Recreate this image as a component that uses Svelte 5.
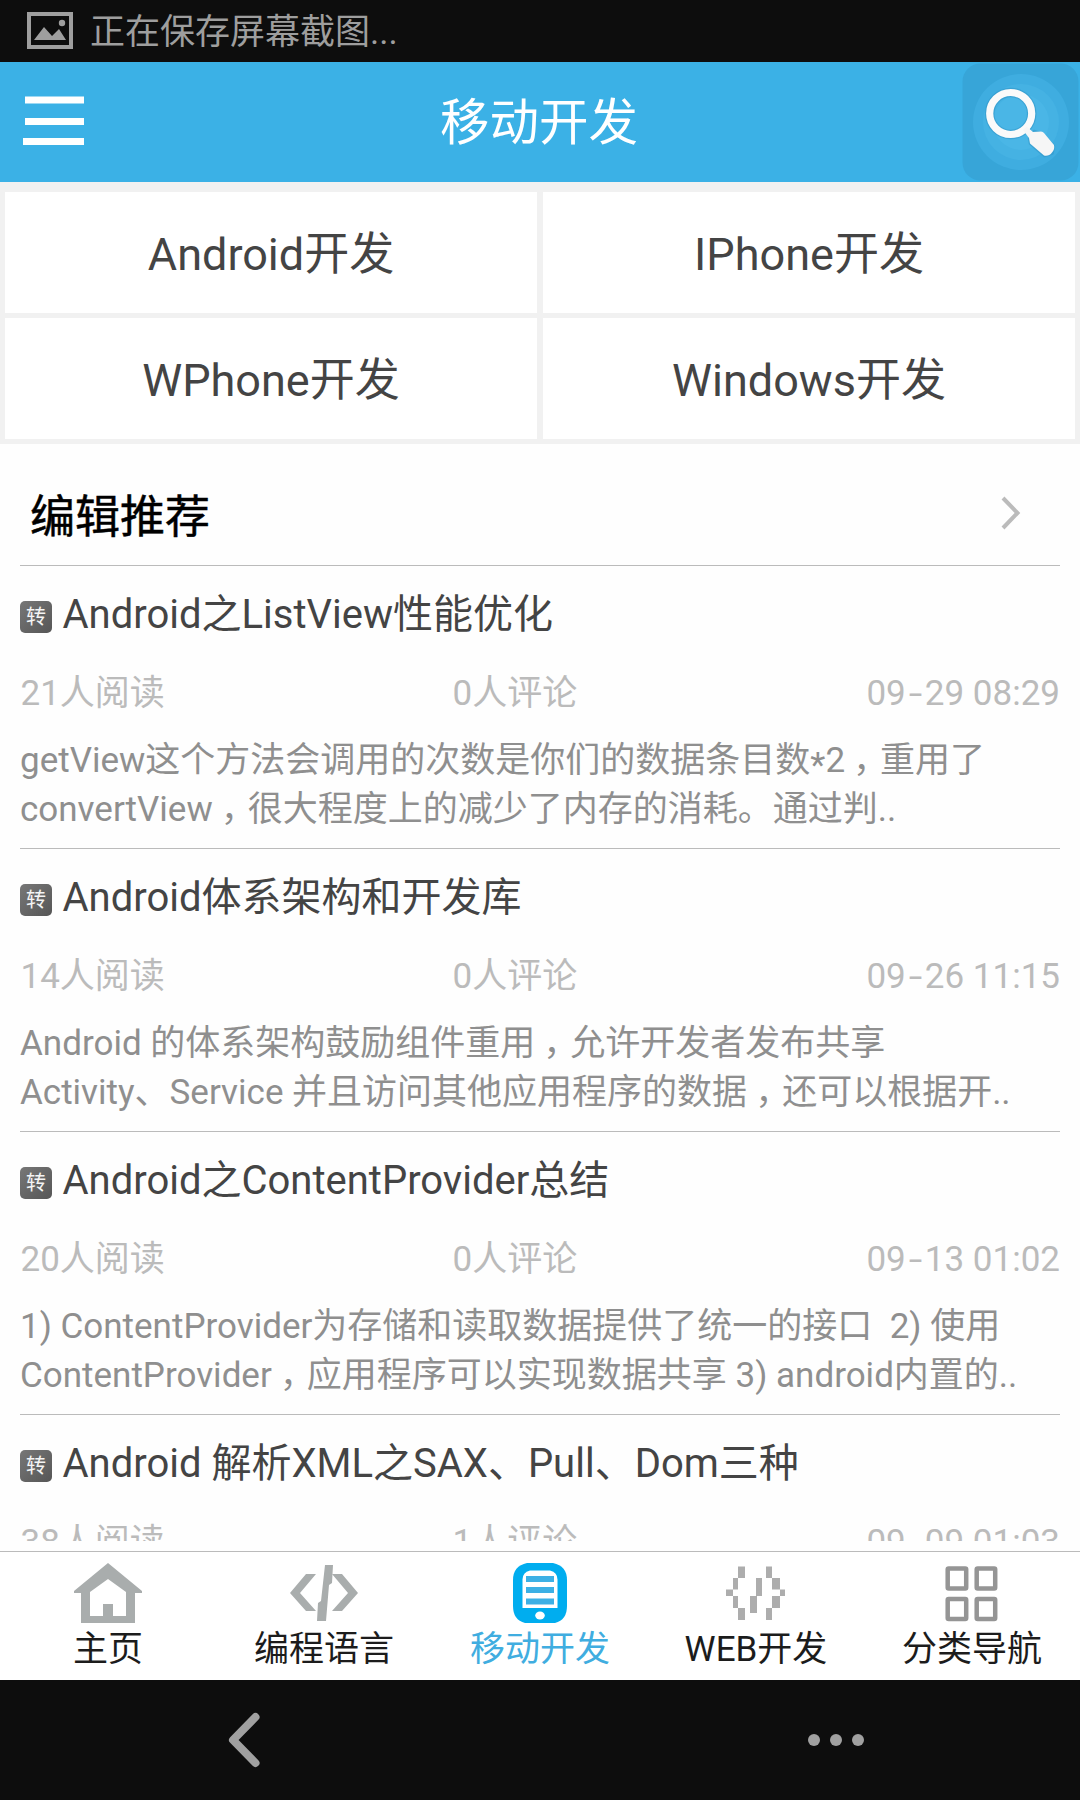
<script>
  const categories = ['Android开发', 'IPhone开发', 'WPhone开发', 'Windows开发'];
  const articles = [
    { title: 'Android之ListView性能优化', reads: 21, comments: 0, day: ['09', '29'], hour: '08:29',
      lines: ['getView这个方法会调用的次数是你们的数据条目数*2，重用了', 'convertView，很大程度上的减少了内存的消耗。通过判..'] },
    { title: 'Android体系架构和开发库', reads: 14, comments: 0, day: ['09', '26'], hour: '11:15',
      lines: ['Android 的体系架构鼓励组件重用，允许开发者发布共享', 'Activity、Service 并且访问其他应用程序的数据，还可以根据开..'] },
    { title: 'Android之ContentProvider总结', reads: 20, comments: 0, day: ['09', '13'], hour: '01:02',
      lines: ['1) ContentProvider为存储和读取数据提供了统一的接口  2) 使用', 'ContentProvider，应用程序可以实现数据共享 3) android内置的..'] },
    { title: 'Android 解析XML之SAX、Pull、Dom三种', reads: 38, comments: 1, day: ['09', '09'], hour: '01:03', lines: [] }
  ];
  // Full-width commas and asterisks are set in their own spans to adjust their place in the line.
  const parts = (line) => line.split(/([，*])/);
</script>

<div class="screen">
  <div class="status">
    <svg width="46" height="38" viewBox="0 0 46 38"><rect x="2" y="2" width="42" height="33" fill="none" stroke="#9e9e9e" stroke-width="4"/><path d="M7 28L17 15l8 9 7-7 7 11z" fill="#9e9e9e"/><circle cx="35" cy="11" r="3.2" fill="#9e9e9e"/></svg>
    <span>正在保存屏幕截图...</span>
  </div>

  <header>
    <svg class="menu" width="61" height="50" viewBox="0 0 61 50"><path d="M2 4h59M2 25.500h59M0 45.500h61" stroke="#fff" stroke-width="7"/></svg>
    <h1>移动开发</h1>
    <svg class="search" width="118" height="119" viewBox="0 0 118 119">
      <rect x=".5" y=".5" width="116" height="117" rx="18" fill="#37a5d8"/>
      <circle cx="59" cy="59" r="48" fill="#3fade0"/>
      <circle cx="59" cy="59" r="38" fill="#45b2e3"/>
      <circle cx="59" cy="59" r="28" fill="#4ab6e6"/>
      <g stroke="#2c8fc0" stroke-opacity=".45" fill="none" stroke-linejoin="round"><circle cx="48.700" cy="50.500" r="21" stroke-width="9.500"/><path d="M72 68l8 2.500 12 12.500-1.500 7.500-8 2.500L68 80.500 67 75z" stroke-width="2.500"/></g>
      <circle cx="48.700" cy="50.500" r="21" fill="none" stroke="#fafafa" stroke-width="7.200"/>
      <path d="M64.700 63.500L71 69l8-.5q2 0 3 1.500l10 12q1 4-2 7.500-3 4-8 3L68 80.500 67 75l-6-8z" fill="#f6f6f6"/>
    </svg>
  </header>

  <div class="cats">
    {#each categories as name}
      <div class="cat">{name}</div>
    {/each}
  </div>

  <main>
    <div class="section">
      <h2>编辑推荐</h2>
      <svg width="20" height="34" viewBox="0 0 20 34"><path d="M2 2l14.500 15L2 32" fill="none" stroke="#bbb" stroke-width="4"/></svg>
    </div>
    {#each articles as a}
      <article>
        <div class="title"><span class="badge">转</span><h3>{a.title}</h3></div>
        <div class="meta"><span>{a.reads}人阅读</span><span>{a.comments}人评论</span><span>{a.day[0]}<span class="dash">-</span>{a.day[1]} {a.hour}</span></div>
        <div class="desc">
          {#each a.lines as line}
            <p>{#each parts(line) as t}{#if t === '，'}<span class="comma">，</span>{:else if t === '*'}<span class="star">*</span>{:else}{t}{/if}{/each}</p>
          {/each}
        </div>
      </article>
    {/each}
  </main>

  <nav class="tabs">
    <div class="tab">
      <svg width="70" height="60" viewBox="0 0 70 60"><path fill-rule="evenodd" d="M35 0l34 28v2h-7v30H8V30H1v-2zM35 16L17 29v24h13V41h10v12h13V29z" fill="#a9adad"/></svg>
      <span>主页</span>
    </div>
    <div class="tab">
      <svg width="70" height="60" viewBox="0 0 70 60"><path d="M17 11h10L11 30l16 18H17L1 30zM53 11H43l16 19-16 18h10l16-18zM36 2h8l-1 18-3 2-3 36h-9l1-18 3-2z" fill="#a9adad"/></svg>
      <span>编程语言</span>
    </div>
    <div class="tab active">
      <svg width="54" height="60" viewBox="0 0 54 60"><path d="M14 0h26q14 3 14 17v26q0 14-12 17H12Q0 57 0 43V17Q0 3 14 0z" fill="#00adef"/><path d="M17 7.500h20q7.500 2 7.500 9V45h-35V16.500q0-7 7.500-9z" fill="#fff"/><path d="M13 16h28M13 27h28M13 38.500h28" stroke="#3cb0e5" stroke-width="6"/><ellipse cx="27" cy="52.500" rx="4.800" ry="4" fill="#fff"/></svg>
      <span>移动开发</span>
    </div>
    <div class="tab">
      <svg width="60" height="60" viewBox="0 0 60 60"><path d="M12 3.500h7V15h-7zM7 15h5v11.500H7zM0 26.500h7V33H0zM7 33h5v12H7zM12 45h7v12h-7zM40 3.500h6V15h-6zM46 15h8v11.500h-8zM54 26.500h5V33h-5zM46 33h8v12h-8zM40 45h6v12h-6zM30 15h6v18h-6zM24 33h7v17h-7z" fill="#adadad"/></svg>
      <span>WEB开发</span>
    </div>
    <div class="tab">
      <svg width="54" height="60" viewBox="0 0 54 60"><g fill="none" stroke="#959595" stroke-width="4.500"><rect x="2.700" y="5.500" width="18.500" height="20" rx="1"/><rect x="31.700" y="5.500" width="18.500" height="20" rx="1"/><rect x="2.700" y="36" width="18.500" height="20" rx="1"/><rect x="31.700" y="36" width="18.500" height="20" rx="1"/></g></svg>
      <span>分类导航</span>
    </div>
  </nav>

  <footer>
    <svg width="34" height="58" viewBox="0 0 34 58"><path d="M28.500 6L6 29l22.500 23" fill="none" stroke="#a0a0a0" stroke-width="8" stroke-linecap="round" stroke-linejoin="round"/></svg>
    <svg width="58" height="14" viewBox="0 0 58 14"><g fill="#a0a0a0"><circle cx="7" cy="7" r="6"/><circle cx="29" cy="7" r="6"/><circle cx="51" cy="7" r="6"/></g></svg>
  </footer>
</div>

<style>
  :global(body) { margin: 0; background: #fff; }
  .screen { width: 1080px; height: 1800px; display: flex; flex-direction: column; overflow: hidden; background: #fefefe; font-family: Roboto, "Noto Sans CJK SC", sans-serif; white-space: nowrap; }
  svg { display: block; flex: none; }
  h1, h2, h3, p { margin: 0; font-weight: 400; }
  .status { flex: none; height: 62px; box-sizing: border-box; background: #0d0d0d; display: flex; align-items: center; padding: 0 0 0 27px; gap: 17px; color: #9e9e9e; font-size: 35px; line-height: 60px; }
  .status span { padding-top: 4px; }
  header { flex: none; height: 120px; background: #3bb1e6; display: grid; grid-template-columns: 120px 1fr 120px; align-items: center; color: #fff; }
  .menu { margin: 0 0 2px 23px; }
  h1 { text-align: center; font-size: 49.500px; line-height: 118px; padding: 2px 2px 0 0; }
  .search { margin-left: 2px; }
  .cats { flex: none; background: #f1f1f1; display: grid; grid-template-columns: 532px 532px; grid-auto-rows: 121px; gap: 5px 6px; padding: 10px 5px 5px; }
  .cat { background: #fff; color: #444; text-align: center; font-size: 45px; line-height: 126px; height: 121px; }
  main { flex: none; height: 1097px; overflow: hidden; padding: 0 20px; }
  .section { height: 121px; display: flex; justify-content: space-between; align-items: center; padding: 0 39px 0 10px; }
  h2 { font-size: 45px; color: #000; -webkit-text-stroke: .5px #000; line-height: 121px; padding-top: 26px; }
  .section svg { margin-top: 17px; }
  article { height: 282px; border-top: 1px solid #bbb; }
  .title { height: 90px; display: flex; align-items: center; gap: 10px; color: #444; }
  .badge { width: 32px; height: 32px; border-radius: 5px; background: linear-gradient(135deg, #777, #565656); color: #f4f4f4; font-size: 20px; line-height: 32px; text-align: center; margin-top: 11px; }
  h3 { font-size: 40px; line-height: 90px; padding: 7px 0 0 .5px; }
  .meta { height: 72px; display: grid; grid-template-columns: 432px 1fr auto; line-height: 76px; font-size: 35px; color: #bbb; }
  .meta > span { padding-left: .5px; }
  .dash { display: inline-block; padding: 0 4.700px; transform: scaleX(1.4); }
  .desc { color: #8f8f8f; font-size: 35px; line-height: 49px; padding-top: 8px; }
  .desc p { white-space: pre; height: 49px; }
  .comma { display: inline-block; transform: translateX(8px); }
  .star { display: inline-block; transform: translateY(5px); }
  .tabs { flex: none; height: 129px; margin-top: 10px; box-sizing: border-box; border-top: 1px solid #bbb; background: #fff; display: grid; grid-template-columns: repeat(5, 216px); }
  .tab { display: flex; flex-direction: column; align-items: center; padding-top: 11px; color: #1c1c1c; font-size: 35px; line-height: 53px; }
  .active { color: #40ade0; }
  footer { flex: none; height: 120px; background: #0d0d0d; display: flex; align-items: center; padding-left: 227px; gap: 546px; }
</style>
